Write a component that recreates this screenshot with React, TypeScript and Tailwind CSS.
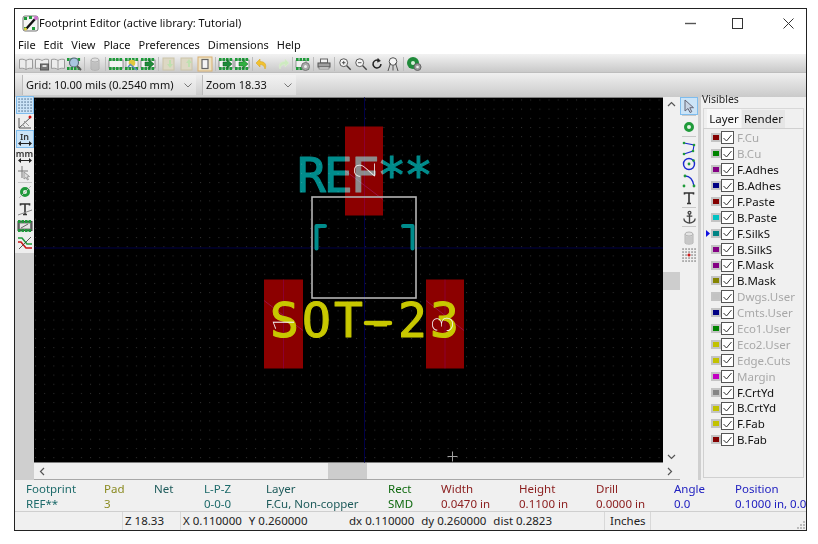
import React from 'react';

const font = { fontFamily: '"Noto Sans", "Liberation Sans", sans-serif' };

// small toolbar drawings
const Book = () => (
  <svg width="16" height="16" viewBox="0 0 16 16" fill="#ececec" stroke="#9a9a9a">
    <path d="M8 4.500C6 3 3.500 3 1.500 3.500v9c2-.5 4.500-.5 6.500 1 2-1.500 4.500-1.500 6.500-1v-9C12.500 3 10 3 8 4.500zM8 4.500v9" />
  </svg>
);
const BookBox = () => (
  <svg width="16" height="16" viewBox="0 0 16 16" fill="#ececec" stroke="#9a9a9a">
    <path d="M8 4.500C6 3 3.500 3 1.500 3.500v9c2-.5 4.500-.5 6.500 1 2-1.500 4.500-1.500 6.500-1v-9C12.500 3 10 3 8 4.500z" />
    <rect x="6.500" y="8" width="8" height="6" fill="#777" stroke="#555" />
    <rect x="8.500" y="9" width="4" height="2" fill="#ddd" stroke="none" />
  </svg>
);
const Dots = ({ dim }: { dim?: boolean }) => (
  <g fill={dim ? '#b5d8b0' : '#1f9a3a'}>
    {[1, 4.500, 8, 11.500].map(x => (
      <React.Fragment key={x}>
        <rect x={x} y="2" width="2.600" height="3" />
        <rect x={x} y="11" width="2.600" height="3" />
      </React.Fragment>
    ))}
  </g>
);
const Chip = ({ arrow, fill = '#f4f4f4' }: { arrow?: string; fill?: string }) => (
  <svg width="16" height="16" viewBox="0 0 16 16">
    <rect x="1" y="4" width="14" height="8" fill={fill} stroke="#555" strokeWidth=".6" />
    <Dots />
    {arrow && <path d="M5 6h4V3.500L14 8l-5 4.500V10H5z" fill={arrow} stroke="#0c5a1a" strokeWidth=".5" />}
  </svg>
);
const ChipMagnify = () => (
  <svg width="16" height="16" viewBox="0 0 16 16">
    <Dots />
    <circle cx="8" cy="6.500" r="4.500" fill="#a9c6e0" stroke="#567" strokeWidth="1.100" />
    <path d="M11 10l4 4" stroke="#555" strokeWidth="2" />
  </svg>
);
const ChipStar = () => (
  <svg width="16" height="16" viewBox="0 0 16 16">
    <rect x="2" y="4.500" width="12" height="7" fill="#f2f2f2" stroke="#777" strokeWidth=".6" />
    <Dots />
    <circle cx="8" cy="7" r="3.300" fill="#e0c840" />
    <path d="M7 9l6 5M4 11l3-3" stroke="#5a88c0" strokeWidth="1.400" />
  </svg>
);
const ChipGear = () => (
  <svg width="16" height="16" viewBox="0 0 16 16">
    <rect x="1" y="4.500" width="10" height="7" fill="#f0f0f0" stroke="#666" strokeWidth=".6" />
    <Dots />
    <circle cx="10.500" cy="10.500" r="4" fill="#aaa" stroke="#777" />
    <circle cx="10.500" cy="10.500" r="1.500" fill="#eee" />
  </svg>
);
const Faded = ({ up }: { up?: boolean }) => (
  <svg width="16" height="16" viewBox="0 0 16 16">
    <rect x="2" y="2" width="11" height="12" fill="#ddd8c4" stroke="#cbc4a8" />
    <path d={up ? 'M9 11V7H7l3-4 3 4h-2v4z' : 'M8 4v4H6l3 4 3-4h-2V4z'} fill="#bfe0b0" />
  </svg>
);
const Page = () => (
  <svg width="16" height="16" viewBox="0 0 16 16">
    <rect x="1" y="1" width="14" height="14" fill="#ece2c6" stroke="#d9b070" />
    <rect x="5" y="3.500" width="6" height="9" fill="#f4f4f4" stroke="#666" strokeWidth="1.200" />
  </svg>
);
const Undo = ({ dim }: { dim?: boolean }) => (
  <svg width="16" height="16" viewBox="0 0 16 16">
    <path
      d={dim ? 'M11 3L15 7l-4 4V8.500C8 8.500 6.500 10 6 13 4 9 6 5.500 11 5.500z' : 'M5 3L1 7l4 4V8.500C8 8.500 9.500 10 10 13c2-4 0-7.500-5-7.500z'}
      fill={dim ? '#cdeac0' : '#f2c230'}
      stroke={dim ? '#dcecd0' : '#d8a828'}
      strokeWidth=".6"
    />
  </svg>
);
const Printer = () => (
  <svg width="16" height="16" viewBox="0 0 16 16">
    <rect x="4.500" y="3" width="7" height="4" fill="#f4f4f4" stroke="#666" />
    <rect x="2" y="7" width="12" height="4" fill="#a0a0a0" stroke="#555" />
    <rect x="3" y="11" width="10" height="2" fill="#e4e4e4" stroke="#666" strokeWidth=".6" />
  </svg>
);
const Zoom = ({ sign }: { sign: '+' | '-' }) => (
  <svg width="14" height="14" viewBox="0 0 16 16" fill="none" stroke="#444">
    <circle cx="6.500" cy="6.500" r="4.500" fill="#f5f5f5" />
    <path d="M10 10l4.500 4.500" strokeWidth="1.600" />
    <path d={sign === '+' ? 'M4.500 6.500h4M6.500 4.500v4' : 'M4.500 6.500h4'} />
  </svg>
);
const Redraw = () => (
  <svg width="14" height="14" viewBox="0 0 16 16" fill="none" stroke="#222" strokeWidth="1.700">
    <path d="M12.500 8A4.500 4.500 0 1 1 10 4" />
    <path d="M9 1.500l3 3-3.500 1.500z" fill="#222" strokeWidth=".5" />
  </svg>
);
const ZoomFit = () => (
  <svg width="16" height="16" viewBox="0 0 16 16" fill="none" stroke="#555">
    <circle cx="8" cy="5.500" r="3.800" fill="#f5f5f5" />
    <path d="M8 9.500v5M3 15l2.500-8M13 15l-2.500-8" />
  </svg>
);
const GreenGear = () => (
  <svg width="16" height="16" viewBox="0 0 16 16">
    <circle cx="7" cy="7" r="6" fill="#1f8a3a" />
    <circle cx="7" cy="7" r="2" fill="#d8efd8" />
    <circle cx="11.500" cy="11" r="3.500" fill="#999" stroke="#666" />
    <circle cx="11.500" cy="11" r="1.300" fill="#eee" />
  </svg>
);
const Trash = ({ faded }: { faded?: boolean }) => (
  <svg width="16" height="16" viewBox="0 0 16 16" opacity={faded ? 0.7 : 1}>
    <path d="M4 4v9c0 1.500 8 1.500 8 0V4z" fill="#c4c4c4" stroke="#9a9a9a" />
    <ellipse cx="8" cy="4" rx="4" ry="2" fill="#dedede" stroke="#9a9a9a" />
    <path d="M6 7v6M8 7v6M10 7v6" stroke="#a8a8a8" />
  </svg>
);
const GridIcon = ({ red }: { red?: boolean }) => (
  <svg width="16" height="16" viewBox="0 0 16 16" fill={red ? '#666' : '#4a6a8a'}>
    {[2, 5, 8, 11, 14].map(x =>
      [2, 5, 8, 11, 14].map(y => <rect key={`${x}-${y}`} x={x - 0.6} y={y - 0.6} width="1.300" height="1.300" />)
    )}
    {red && <path d="M6.500 8h3M8 6.500v3" stroke="#d01010" strokeWidth="1.400" />}
  </svg>
);
const Polar = () => (
  <svg width="16" height="16" viewBox="0 0 16 16" fill="none" stroke="#555">
    <path d="M2 14L14 3M2 14h12M2 14V4" />
    <path d="M5 10l3 3M7 7l5 5" stroke="#999" />
    <circle cx="13" cy="3" r="1.500" fill="#d01010" stroke="none" />
  </svg>
);
const Ruler = ({ label }: { label: string }) => (
  <div className="flex flex-col items-center leading-none text-[9px] font-semibold text-[#333]" style={font}>
    <span className="h-[9px]">{label}</span>
    <svg width="14" height="5" viewBox="0 0 14 5" fill="#222">
      <path d="M0 2.500L3 0v2h8V0l3 2.500L11 5V3H3v2z" />
    </svg>
  </div>
);
const CursorCross = () => (
  <svg width="16" height="16" viewBox="0 0 16 16" fill="none" stroke="#aaa">
    <path d="M5 1v12M1 6h10" stroke="#777" />
    <path d="M7 7v7l2-1.500 1.500 2.500 1-.5L10 12l2.500-.5z" fill="#ddd" stroke="#999" />
  </svg>
);
const Ring = ({ grey }: { grey?: boolean }) => (
  <svg width="16" height="16" viewBox="0 0 16 16">
    <circle cx="8" cy="8" r="3.500" fill="#e4f2e4" stroke="#1f9a3a" strokeWidth="3" />
    {grey && <path d="M2 14L14 2" stroke="#bbb" />}
  </svg>
);
const Tee = ({ cross }: { cross?: boolean }) => (
  <svg width="16" height="16" viewBox="0 0 16 16" fill="none" stroke="#333">
    <path d="M3.500 4.500V3h9v1.500M8 3v10M6 13.500h4" strokeWidth="1.600" />
    {cross && <path d="M1 14L15 9" stroke="#888" />}
  </svg>
);
const ChipBox = () => (
  <svg width="16" height="16" viewBox="0 0 16 16">
    <rect x="1" y="3.500" width="14" height="9" fill="#777" stroke="#444" />
    <Dots />
    <rect x="3" y="5.500" width="10" height="5" fill="#e4e4e4" />
    <path d="M4 10l7-4" stroke="#666" />
  </svg>
);
const Traces = () => (
  <svg width="16" height="16" viewBox="0 0 16 16" fill="none" strokeWidth="1.600">
    <path d="M1 3h4l5 6h5" stroke="#1f9a3a" />
    <path d="M1 7h3l5 6h6" stroke="#c81818" />
    <path d="M2 14L14 2" stroke="#333" strokeWidth=".8" />
  </svg>
);
const Arrow = () => (
  <svg width="16" height="16" viewBox="0 0 16 16">
    <path d="M4 2v11l3-2.500 2 4 1.800-.8-2-4H12.500z" fill="#c8d4e4" stroke="#667" />
  </svg>
);
const Polyline = () => (
  <svg width="16" height="16" viewBox="0 0 16 16" fill="#1f9a3a" stroke="#1a2ad0" strokeWidth="1.100">
    <path d="M3 3l10 2-1 6-9 3" fill="none" />
    <circle cx="3" cy="3" r="1.300" stroke="none" />
    <circle cx="13" cy="5" r="1.300" stroke="none" />
    <circle cx="12" cy="11" r="1.300" stroke="none" />
    <circle cx="3" cy="14" r="1.300" stroke="none" />
  </svg>
);
const CircleTool = () => (
  <svg width="16" height="16" viewBox="0 0 16 16" fill="none" stroke="#1a2ad0" strokeWidth="1.400">
    <circle cx="8" cy="8" r="5.500" />
    <circle cx="8" cy="8" r="1.400" fill="#1f9a3a" stroke="none" />
    <circle cx="12.500" cy="4.500" r="1.300" fill="#1f9a3a" stroke="none" />
  </svg>
);
const ArcTool = () => (
  <svg width="16" height="16" viewBox="0 0 16 16" fill="none" stroke="#1a2ad0" strokeWidth="1.400">
    <path d="M4 3c5 0 8 4 9 10" />
    <circle cx="4" cy="3" r="1.400" fill="#1f9a3a" stroke="none" />
    <circle cx="3" cy="13" r="1.400" fill="#1f9a3a" stroke="none" />
    <circle cx="13" cy="13" r="1.400" fill="#1f9a3a" stroke="none" />
  </svg>
);
const Anchor = () => (
  <svg width="15" height="15" viewBox="0 0 16 16" fill="none" stroke="#444" strokeWidth="1.400">
    <circle cx="8" cy="3" r="1.500" />
    <path d="M8 4.500V14M5 6.500h6M2 9c0 3 3 5 6 5s6-2 6-5" />
  </svg>
);
const AppIcon = () => (
  <svg width="17" height="17" viewBox="0 0 17 17">
    <rect x="1" y="1" width="15" height="15" rx="2" fill="#f4f4f4" stroke="#777" />
    <g fill="#1f9a3a">
      <rect x="2" y="2" width="3" height="3" />
      <rect x="7" y="1" width="3" height="3" />
      <rect x="2" y="12" width="3" height="3" />
      <rect x="10" y="12" width="3" height="3" />
    </g>
    <path d="M4 14L13 4" stroke="#111" strokeWidth="2.400" />
    <circle cx="14" cy="3" r="2" fill="#d070d0" />
    <circle cx="3.500" cy="14" r="1.500" fill="#e8d040" />
  </svg>
);

const Btn = ({ children, active }: { children: React.ReactNode; active?: boolean }) => (
  <div className={`w-[16px] h-[16px] flex items-center justify-center shrink-0 ${active ? 'bg-[#cce4f7] outline outline-[#7fbdee]' : ''}`}>
    {children}
  </div>
);
const VSep = () => <div className="w-[5px] h-[14px] shrink-0 flex justify-center"><div className="w-px h-full bg-[#bdbdbd]" /></div>;
const HSep = () => <div className="h-[1px] w-[14px] bg-[#c8c8c8] shrink-0" />;

const Combo = ({ label, className }: { label: string; className: string }) => (
  <div className={`h-[20px] flex items-center justify-between pl-[3px] pr-[3px] bg-gradient-to-b from-[#f2f2f2] to-[#dedede] border-l border-[#bbb] text-[11px] text-[#111] whitespace-nowrap ${className}`}>
    <span>{label}</span>
    <svg width="8" height="5" viewBox="0 0 8 5" fill="none" stroke="#777" className="mr-[1px]">
      <path d="M.5 .5L4 4 7.500 .5" />
    </svg>
  </div>
);

const layers: [string, string, boolean][] = [
  ['F.Cu', '#840000', true],
  ['B.Cu', '#008400', true],
  ['F.Adhes', '#840084', false],
  ['B.Adhes', '#000084', false],
  ['F.Paste', '#840000', false],
  ['B.Paste', '#00c2c2', false],
  ['F.SilkS', '#008484', false],
  ['B.SilkS', '#840084', false],
  ['F.Mask', '#840084', false],
  ['B.Mask', '#848400', false],
  ['Dwgs.User', '#c2c2c2', true],
  ['Cmts.User', '#000084', true],
  ['Eco1.User', '#008400', true],
  ['Eco2.User', '#c2c200', true],
  ['Edge.Cuts', '#c2c200', true],
  ['Margin', '#c200c2', true],
  ['F.CrtYd', '#848484', false],
  ['B.CrtYd', '#c2c200', false],
  ['F.Fab', '#c2c200', false],
  ['B.Fab', '#840000', false],
];

const LayerRow = ({ name, color, dim, active }: { name: string; color: string; dim: boolean; active: boolean }) => (
  <div className="h-[15.9px] flex items-center">
    <div className="w-[6px] flex justify-end">
      {active && <svg width="4" height="7" viewBox="0 0 4 7"><path d="M0 0l4 3.500L0 7z" fill="#1010e0" /></svg>}
    </div>
    <div className="w-[6px] h-[5px] ml-[1px] border-2 border-[#c4c4c4] box-content" style={{ backgroundColor: color }} />
    <div className="w-[13px] h-[13px] bg-white border border-[#555] flex items-center justify-center">
      <svg width="9" height="8" viewBox="0 0 9 8" fill="none" stroke="#333"><path d="M.5 4L3.500 7 8.500 1" /></svg>
    </div>
    <span className={`ml-[3px] text-[11.5px] ${dim ? 'text-[#a8a8a8]' : 'text-[#111]'}`}>{name}</span>
  </div>
);

const msgColumns = [
  { w: 'w-[78px]', top: 'Footprint', bottom: 'REF**', color: 'text-[#1d6a6a]' },
  { w: 'w-[50px]', top: 'Pad', bottom: '3', color: 'text-[#8a8a20]' },
  { w: 'w-[50px]', top: 'Net', bottom: '', color: 'text-[#1d5a5a]' },
  { w: 'w-[62px]', top: 'L-P-Z', bottom: '0-0-0', color: 'text-[#1d6a6a]' },
  { w: 'w-[122px]', top: 'Layer', bottom: 'F.Cu, Non-copper', color: 'text-[#1d5a5a]' },
  { w: 'w-[53px]', top: 'Rect', bottom: 'SMD', color: 'text-[#106a10]' },
  { w: 'w-[78px]', top: 'Width', bottom: '0.0470 in', color: 'text-[#8c2020]' },
  { w: 'w-[77px]', top: 'Height', bottom: '0.1100 in', color: 'text-[#8c2020]' },
  { w: 'w-[78px]', top: 'Drill', bottom: '0.0000 in', color: 'text-[#8c2020]' },
  { w: 'w-[61px]', top: 'Angle', bottom: '0.0', color: 'text-[#2020c0]' },
  { w: 'w-[120px]', top: 'Position', bottom: '0.1000 in, 0.0900 in', color: 'text-[#2020c0]' },
];

const monoFont = '"DejaVu Sans Mono", monospace';

// the drawing on the board canvas, in screenshot coordinates
const Board = () => (
  <svg className="block w-full h-full" viewBox="34 97 629 365">
    <defs>
      <pattern id="grid" x="35" y="99" width="9.170" height="9.170" patternUnits="userSpaceOnUse">
        <rect x="0" y="0" width="1" height="1" fill="#303030" />
      </pattern>
    </defs>
    <rect x="34" y="97" width="629" height="365" fill="#000" />
    <rect x="34" y="97" width="629" height="365" fill="url(#grid)" />
    <path d="M364.500 97V462M34 247.500H663" stroke="#000048" />
    <g fill="#8c0000">
      <rect x="345" y="126" width="38" height="89" />
      <rect x="264" y="279" width="39" height="89" />
      <rect x="426" y="279" width="38" height="89" />
    </g>
    <path d="M345 170l38 29M264 300l39 30M426 300l38 30" stroke="#a01860" strokeWidth=".7" />
    <path d="M364.500 126V215M283.500 279v89M445 279v89" stroke="#8c0060" strokeWidth=".5" />
    <rect x="312" y="196.500" width="104" height="101" fill="none" stroke="#b4b4b4" strokeWidth="1.600" />
    <path d="M325 225.500h-8.500v22.500M403 225.500h9.500v22.500" fill="none" stroke="#008c8c" strokeWidth="4" strokeLinecap="round" strokeLinejoin="round" />
    <text
      x="297"
      y="191"
      textLength="136"
      lengthAdjust="spacing"
      fontSize="48"
      fontFamily={monoFont}
      fill="#008c8c"
      stroke="#008c8c"
      strokeWidth="1.100"
      strokeLinejoin="round"
      className="mix-blend-screen"
    >
      REF**
    </text>
    <text
      x="270"
      y="336"
      textLength="189"
      lengthAdjust="spacing"
      fontSize="48"
      fontFamily={monoFont}
      fill="#c8c800"
      stroke="#c8c800"
      strokeWidth="1.100"
      strokeLinejoin="round"
    >
      SOT-23
    </text>
    {/* the board font's dash is much longer than the hyphen of this one */}
    <path d="M366 322.500H390" stroke="#c8c800" strokeWidth="4.500" strokeLinecap="round" />
    <g fontSize="30" fontWeight="100" fontFamily='Roboto, "Liberation Sans", sans-serif' fill="#f4f4f4">
      <text transform="translate(375 178) rotate(-90)">2</text>
      <text transform="translate(294 331) rotate(-90)">1</text>
      <text transform="translate(453 332) rotate(-90)">3</text>
    </g>
    <path d="M447.500 456h10M452.500 451v10" stroke="#a0a0a0" />
  </svg>
);

const App: React.FC = () => {
  return (
    <div className="w-[818px] h-[544px] bg-white pt-[8px] pl-[14px]" style={font}>
      <div className="w-[793px] h-[523px] border border-[#222] flex flex-col bg-white overflow-hidden">
        {/* title bar */}
        <div className="h-[28px] flex items-center shrink-0">
          <div className="ml-[7px]"><AppIcon /></div>
          <span className="text-[11px] text-[#111]">Footprint Editor (active library: Tutorial)</span>
          <div className="ml-auto flex items-center">
            <svg width="11" height="11" viewBox="0 0 11 11" className="mr-[36px]"><path d="M0 5.500h11" stroke="#555" strokeWidth="1.400" /></svg>
            <svg width="11" height="11" viewBox="0 0 11 11" className="mr-[40px]"><rect x=".5" y=".5" width="10" height="10" fill="none" stroke="#333" /></svg>
            <svg width="11" height="11" viewBox="0 0 11 11" className="mr-[12px]"><path d="M.5 .5l10 10M10.500 .5l-10 10" stroke="#333" /></svg>
          </div>
        </div>
        {/* menu */}
        <div className="h-[17px] flex items-center pl-[3px] gap-[8px] text-[11px] text-[#111] shrink-0">
          {['File', 'Edit', 'View', 'Place', 'Preferences', 'Dimensions', 'Help'].map(m => (
            <span key={m}>{m}</span>
          ))}
        </div>
        {/* main toolbar */}
        <div className="h-[19px] flex items-center pl-[3px] pt-[1px] shrink-0 bg-gradient-to-b from-[#f2f2f2] to-[#c9c9c9] border-b border-[#bdbdbd]">
          <Btn><Book /></Btn><Btn><BookBox /></Btn><Btn><Book /></Btn><Btn><ChipMagnify /></Btn>
          <VSep />
          <Btn><Trash faded /></Btn>
          <VSep />
          <Btn><Chip /></Btn><Btn><ChipStar /></Btn><Btn><Chip arrow="#1f8a3a" /></Btn>
          <VSep />
          <Btn><Faded /></Btn><div className="w-[2px]" /><Btn><Faded up /></Btn><div className="w-[2px]" /><Btn><Page /></Btn>
          <VSep />
          <Btn><Chip arrow="#1f8a3a" /></Btn><Btn><Chip arrow="#30b040" /></Btn>
          <VSep />
          <Btn><Undo /></Btn><div className="w-[3px]" /><Btn><Undo dim /></Btn>
          <VSep />
          <Btn><ChipGear /></Btn>
          <VSep />
          <Btn><Printer /></Btn>
          <VSep />
          <Btn><Zoom sign="+" /></Btn><Btn><Zoom sign="-" /></Btn><Btn><Redraw /></Btn><Btn><ZoomFit /></Btn>
          <VSep />
          <Btn><GreenGear /></Btn>
        </div>
        {/* selector toolbar */}
        <div className="h-[24px] flex items-center pl-[7px] gap-[6px] shrink-0 bg-gradient-to-b from-[#f0f0f0] to-[#cacaca]">
          <Combo label="Grid: 10.00 mils (0.2540 mm)" className="w-[174px]" />
          <Combo label="Zoom 18.33" className="w-[94px]" />
        </div>
        {/* workspace */}
        <div className="flex-1 flex min-h-0">
          <div className="w-[19px] shrink-0 flex flex-col bg-[#cfcfcf]">
            <div className="bg-[#eeeeee] flex flex-col items-center gap-[1px] pt-0 pb-[2px]">
              <Btn active><GridIcon /></Btn>
              <Btn><Polar /></Btn>
              <Btn active><Ruler label="In" /></Btn>
              <Btn><Ruler label="mm" /></Btn>
              <Btn><CursorCross /></Btn>
              <HSep />
              <Btn><Ring grey /></Btn>
              <Btn><Tee cross /></Btn>
              <Btn><ChipBox /></Btn>
              <Btn><Traces /></Btn>
            </div>
          </div>
          <div className="flex-1 flex flex-col min-w-0">
            <div className="flex-1 flex min-h-0">
              <div className="flex-1 min-w-0"><Board /></div>
              <div className="w-[17px] shrink-0 bg-[#f0f0f0] flex flex-col items-center">
                <svg width="9" height="14" viewBox="0 0 9 14" fill="none" stroke="#555" strokeWidth="1.200" className="mt-[1px]"><path d="M1 8l3.500-3.500L8 8" /></svg>
                <div className="w-full h-[18px] mt-[160px] bg-[#cdcdcd]" />
                <svg width="9" height="14" viewBox="0 0 9 14" fill="none" stroke="#555" strokeWidth="1.200" className="mt-auto"><path d="M1 6l3.500 3.500L8 6" /></svg>
              </div>
            </div>
            <div className="h-[17px] shrink-0 bg-[#f0f0f0] flex items-center border-b border-[#a8a8a8]">
              <svg width="14" height="9" viewBox="0 0 14 9" fill="none" stroke="#555" strokeWidth="1.200" className="ml-[1px]"><path d="M9 1L5.500 4.500 9 8" /></svg>
              <div className="w-[39px] h-full ml-[279px] bg-[#cdcdcd]" />
              <svg width="14" height="9" viewBox="0 0 14 9" fill="none" stroke="#555" strokeWidth="1.200" className="ml-auto mr-[3px]"><path d="M5 1l3.500 3.500L5 8" /></svg>
            </div>
          </div>
          <div className="w-[18px] shrink-0 bg-[#f0f0f0] flex flex-col items-center gap-[1px] pt-[1px]">
            <Btn active><Arrow /></Btn>
            <HSep />
            <div className="h-[1px]" />
            <Btn><Ring /></Btn>
            <HSep />
            <div className="h-[1px]" />
            <Btn><Polyline /></Btn>
            <div className="-mt-[1px]"><Btn><CircleTool /></Btn></div>
            <Btn><ArcTool /></Btn>
            <Btn><Tee /></Btn>
            <HSep />
            <Btn><Anchor /></Btn>
            <HSep />
            <div className="h-[1px]" />
            <Btn><Trash faded /></Btn>
            <Btn><GridIcon red /></Btn>
          </div>
          <div className="w-[3px] shrink-0 bg-[#cfcfcf]" />
          <div className="w-[105px] shrink-0 bg-[#f0f0f0] flex flex-col">
            <div className="h-[11px] pl-[1px] text-[10.5px] leading-[5px] text-[#222]">Visibles</div>
            <div className="flex-1 mx-[2px] mb-[2px] flex flex-col">
              <div className="h-[20px] flex items-end pl-[3px] text-[11.5px] text-[#111] border border-b-0 border-[#d8d8d8]">
                <div className="h-[19px] w-[34px] bg-[#f8f8f8] flex items-center justify-center">Layer</div>
                <div className="h-[18px] w-[43px] ml-[1px] bg-[#e6e6e6] flex items-center justify-center">Render</div>
              </div>
              <div className="flex-1 border border-[#d0d0d0] pt-[1px]">
                {layers.map(([name, color, dim]) => (
                  <LayerRow key={name} name={name} color={color} dim={dim} active={name === 'F.SilkS'} />
                ))}
              </div>
            </div>
          </div>
        </div>
        {/* message panel */}
        <div className="h-[32px] shrink-0 flex pl-[11px] bg-[#f0f0f0] border-b border-[#cfcfcf] text-[11.5px] leading-[15px] overflow-hidden pt-[1px]">
          {msgColumns.map(col => (
            <div key={col.top} className={`${col.w} shrink-0 whitespace-nowrap ${col.color}`}>
              <div>{col.top}</div>
              <div>{col.bottom || '\u00a0'}</div>
            </div>
          ))}
        </div>
        {/* status bar */}
        <div className="h-[18px] shrink-0 flex items-center bg-[#f0f0f0] text-[11.5px] text-[#222]">
          <div className="w-[108px] h-full border-r border-[#d8d8d8]" />
          <div className="w-[58px] h-full pl-[2px] border-r border-[#d8d8d8] flex items-center">Z 18.33</div>
          <div className="w-[166px] h-full pl-[2px] flex items-center gap-[7px]"><span>X 0.110000</span><span>Y 0.260000</span></div>
          <div className="w-[258px] h-full pl-[2px] border-r border-[#d8d8d8] flex items-center gap-[7px]"><span>dx 0.110000</span><span>dy 0.260000</span><span>dist 0.2823</span></div>
          <div className="w-[46px] h-full pl-[5px] border-r border-[#d8d8d8] flex items-center">Inches</div>
          <div className="flex-1 h-full flex items-end justify-end">
            <svg width="9" height="9" viewBox="0 0 9 9" fill="#bbb">
              <rect x="6" y="0" width="2" height="2" /><rect x="3" y="3" width="2" height="2" /><rect x="6" y="3" width="2" height="2" />
              <rect x="0" y="6" width="2" height="2" /><rect x="3" y="6" width="2" height="2" /><rect x="6" y="6" width="2" height="2" />
            </svg>
          </div>
        </div>
      </div>
    </div>
  );
};

export default App;
